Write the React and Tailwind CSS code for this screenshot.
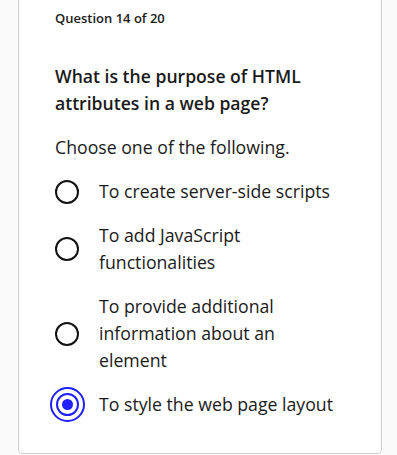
import React from "react";

const options = [
  "To create server-side scripts",
  "To add JavaScript functionalities",
  "To provide additional information about an element",
  "To style the web page layout",
];

function Radio({ selected }) {
  if (selected) {
    return (
      <div className="-mx-[6px] -my-[4px] flex h-[35px] w-[35px] shrink-0 items-center justify-center rounded-full border-[2.5px] border-[#1f1fff]">
        <div className="flex h-[23px] w-[23px] items-center justify-center rounded-full border-[2.5px] border-[#1f1fff]">
          <div className="h-[11px] w-[11px] rounded-full bg-[#1f1fff]" />
        </div>
      </div>
    );
  }
  return <div className="h-[24px] w-[24px] shrink-0 rounded-full border-2 border-[#111]" />;
}

export default function App() {
  return (
    <div className="min-h-[455px] w-[397px] bg-[#fafafa]" style={{ fontFamily: '"Open Sans", sans-serif' }}>
      <div className="ml-[18px] mr-[15px] flex h-[454px] flex-col rounded-b-[5px] border-x border-b border-[#cfcfcf] bg-white pl-[36px] pr-[20px] pt-[8px] text-[#1a1a1a]">
        <div className="text-[13px] font-semibold leading-[20px]">Question 14 of 20</div>
        <div className="mt-[35px] w-[270px] text-[17.6px] font-semibold leading-[27px]">
          What is the purpose of HTML attributes in a web page?
        </div>
        <div className="mt-[17px] text-[17.7px] leading-[27px]">Choose one of the following.</div>
        <div className="mt-[17px] flex flex-col gap-[17px]">
          {options.map((o, i) => (
            <div key={i} className="flex items-center">
              <div className="flex w-[24px] justify-center">
                <Radio selected={i === 3} />
              </div>
              <div
                className="ml-[20px] text-[17.7px] leading-[27px]"
                style={{ width: i === 0 || i === 3 ? 250 : 190 }}
              >
                {o}
              </div>
            </div>
          ))}
        </div>
      </div>
    </div>
  );
}
